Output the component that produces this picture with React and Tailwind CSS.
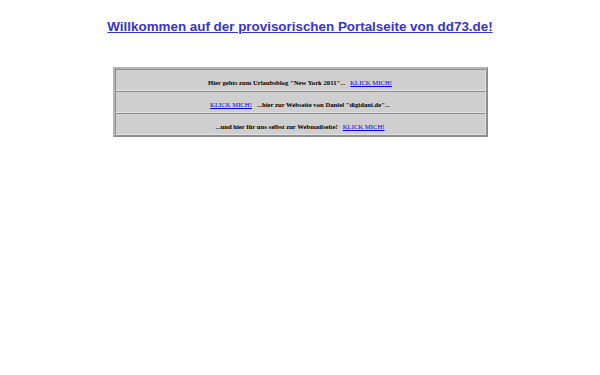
export default function App() {
  const times = { fontFamily: '"Liberation Serif", serif' };
  const link = "text-[#0000ee] underline font-normal";
  const row =
    "h-[22px] border border-t-[#8c8c8c] border-l-[#8c8c8c] border-r-[#e2e2e2] border-b-[#e2e2e2] flex items-end justify-center pb-[2px] text-[6.7px] font-bold text-black gap-[5px]";
  return (
    <div className="w-[600px] h-[375px] bg-white flex flex-col items-center">
      <div className="mt-[17px] h-[20px] flex items-center">
        <a href="#" className="text-[#3434d2] underline font-bold text-[13.4px]" style={{ fontFamily: '"Liberation Sans", Arial, sans-serif' }}>
          Willkommen auf der provisorischen Portalseite von dd73.de!
        </a>
      </div>
      <div className="mt-[30px] w-[375px] border-2 border-t-[#b4b4b4] border-l-[#b4b4b4] border-r-[#8e8e8e] border-b-[#8e8e8e] bg-[#cfcfcf] flex flex-col" style={times}>
        <div className={row}>
          <span>Hier gehts zum Urlaubsblog "New York 2011"...</span>
          <a href="#" className={link}>KLICK MICH!</a>
        </div>
        <div className={row}>
          <a href="#" className={link}>KLICK MICH!</a>
          <span>...hier zur Webseite von Daniel "digidani.de"...</span>
        </div>
        <div className={row}>
          <span>...und hier für uns selbst zur Webmailseite!</span>
          <a href="#" className={link}>KLICK MICH!</a>
        </div>
      </div>
    </div>
  );
}
